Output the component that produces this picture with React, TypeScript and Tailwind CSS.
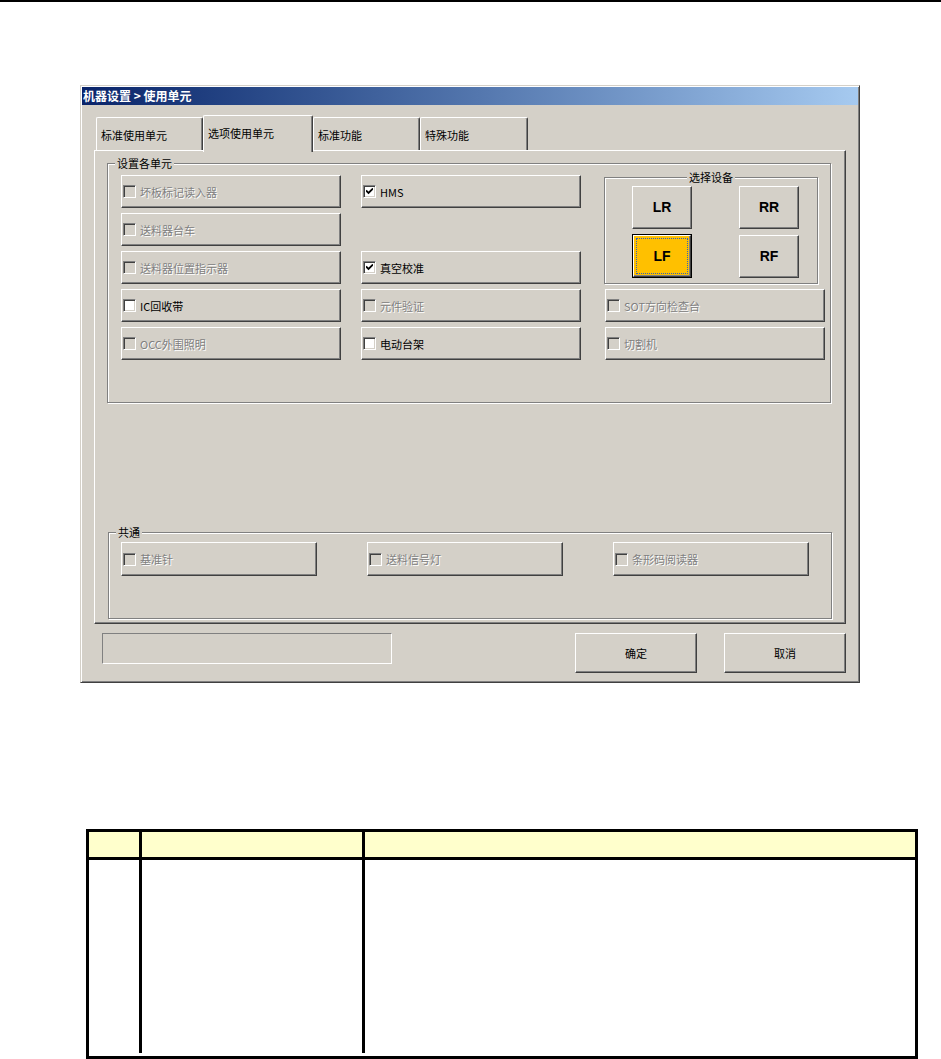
import React from 'react';

const raised =
  'border border-t-white border-l-white border-r-[#404040] border-b-[#404040] shadow-[inset_-1px_-1px_0_#808080] bg-[#d4d0c8]';
const etched = 'border border-[#808080] shadow-[1px_1px_0_#fff,inset_1px_1px_0_#fff]';
const disabledText = 'text-[#808080] [text-shadow:1px_1px_0_#fff]';

function CheckBox({ checked = false, disabled = false }: { checked?: boolean; disabled?: boolean }) {
  return (
    <span
      className={`flex h-[13px] w-[13px] shrink-0 items-center justify-center border border-t-[#808080] border-l-[#808080] border-r-white border-b-white shadow-[inset_1px_1px_0_#404040,inset_-1px_-1px_0_#d4d0c8] ${
        disabled ? 'bg-[#d4d0c8]' : 'bg-white'
      }`}
    >
      {checked && (
        <svg width="7" height="7" viewBox="0 0 7 7">
          <path d="M0 2.5 L2.5 5 L7 0.5" fill="none" stroke="black" strokeWidth="1.8" />
        </svg>
      )}
    </span>
  );
}

interface CheckButtonProps {
  label: string;
  checked?: boolean;
  disabled?: boolean;
  className?: string;
}

function CheckButton({ label, checked, disabled, className = 'w-[220px] h-[33px]' }: CheckButtonProps) {
  return (
    <div className={`${raised} ${className} flex items-center pl-[1px]`}>
      <CheckBox checked={checked} disabled={disabled} />
      <span className={`ml-[4px] text-[11px] leading-[14px] ${disabled ? disabledText : 'text-black'}`}>{label}</span>
    </div>
  );
}

function DeviceButton({ label, active = false }: { label: string; active?: boolean }) {
  if (active) {
    return (
      <div className="h-[44px] w-[60px] border border-black">
        <div className="flex h-full w-full items-center justify-center border border-t-white border-l-white border-r-[#404040] border-b-[#404040] bg-[#ffc000] p-[2px] shadow-[inset_-1px_-1px_0_#808080]">
          <div className="flex h-full w-full items-center justify-center border border-dotted border-[#3060c0] font-['Liberation_Sans',sans-serif] text-[14px] font-bold text-black">
            {label}
          </div>
        </div>
      </div>
    );
  }
  return (
    <div
      className={`${raised} flex h-[43px] w-[60px] items-center justify-center shadow-[inset_-1px_-1px_0_#808080,inset_1px_1px_0_#e8e6e0] font-['Liberation_Sans',sans-serif] text-[14px] font-bold text-black`}
    >
      {label}
    </div>
  );
}

const tabs = [
  { label: '标准使用单元', w: 'w-[107px]' },
  { label: '选项使用单元', w: 'w-[110px]' },
  { label: '标准功能', w: 'w-[107px]' },
  { label: '特殊功能', w: 'w-[108px]' },
];

function Dialog() {
  return (
    <div className="ml-[80px] mt-[83px] h-[598px] w-[780px] border border-t-[#d4d0c8] border-l-[#d4d0c8] border-r-[#404040] border-b-[#404040] bg-[#d4d0c8] p-[1px] shadow-[inset_1px_1px_0_#fff,inset_-1px_-1px_0_#808080]">
      <div className="flex h-[18px] items-center bg-linear-to-r from-[#0a246a] to-[#a6caf0] pl-[1px] text-[12px] font-bold leading-none text-white">
        机器设置 &gt; 使用单元
      </div>

      <div className="pl-[12px]">
        {/* Tabs */}
        <div className="mt-[10px] flex h-[35px] items-end pl-[2px]">
          {tabs.map((t, i) =>
            i === 1 ? (
              <div
                key={t.label}
                className={`${t.w} relative z-10 -mb-[2px] h-[37px] rounded-t-[2px] border-t border-l border-r border-t-white border-l-white border-r-[#404040] bg-[#d4d0c8] pl-[4px] pt-[10px] text-[11px] leading-[14px] text-black shadow-[inset_-1px_0_0_#808080]`}
              >
                {t.label}
              </div>
            ) : (
              <div
                key={t.label}
                className={`${t.w} h-[33px] rounded-t-[2px] border-t border-l border-r border-t-white border-l-white border-r-[#404040] bg-[#d4d0c8] pl-[4px] pt-[10px] text-[11px] leading-[14px] text-black shadow-[inset_-1px_0_0_#808080]`}
              >
                {t.label}
              </div>
            )
          )}
        </div>

        {/* Tab panel */}
        <div className={`${raised} h-[474px] w-[752px] pl-[12px] pt-[12px]`}>
          <div className={`${etched} relative h-[240px] w-[724px]`}>
            <span className="absolute -top-[8px] left-[7px] bg-[#d4d0c8] px-[2px] text-[11px] leading-[14px] text-black">
              设置各单元
            </span>
            <div className="flex pl-[13px] pt-[11px]">
              <div className="flex w-[220px] flex-col gap-[5px]">
                <CheckButton label="坏板标记读入器" disabled />
                <CheckButton label="送料器台车" disabled />
                <CheckButton label="送料器位置指示器" disabled />
                <CheckButton label="IC回收带" />
                <CheckButton label="OCC外围照明" disabled />
              </div>
              <div className="ml-[20px] flex w-[220px] flex-col gap-[5px]">
                <CheckButton label="HMS" checked />
                <div className="h-[33px]" />
                <CheckButton label="真空校准" checked />
                <CheckButton label="元件验证" disabled />
                <CheckButton label="电动台架" />
              </div>
              <div className="ml-[23px] flex w-[221px] flex-col gap-[5px]">
                <div className="h-[109px] pt-[2px]">
                  <div className={`${etched} relative h-[107px] w-[214px]`}>
                    <span className="absolute -top-[8px] left-1/2 -translate-x-1/2 bg-[#d4d0c8] px-[2px] text-[11px] leading-[14px] text-black">
                      选择设备
                    </span>
                    <div className="grid grid-cols-[60px_60px] gap-x-[47px] gap-y-[5px] pl-[27px] pt-[8px]">
                      <DeviceButton label="LR" />
                      <DeviceButton label="RR" />
                      <DeviceButton label="LF" active />
                      <div className="pt-[1px]">
                        <DeviceButton label="RF" />
                      </div>
                    </div>
                  </div>
                </div>
                <div className="ml-[1px]">
                  <CheckButton label="SOT方向检查台" disabled />
                </div>
                <div className="ml-[1px]">
                  <CheckButton label="切割机" disabled />
                </div>
              </div>
            </div>
          </div>

          <div className={`${etched} relative ml-[1px] mt-[129px] h-[87px] w-[724px]`}>
            <span className="absolute -top-[8px] left-[7px] bg-[#d4d0c8] px-[2px] text-[11px] leading-[14px] text-black">
              共通
            </span>
            <div className="flex gap-[50px] pl-[12px] pt-[9px]">
              <CheckButton label="基准针" disabled className="w-[196px] h-[34px]" />
              <CheckButton label="送料信号灯" disabled className="w-[196px] h-[34px]" />
              <CheckButton label="条形码阅读器" disabled className="w-[196px] h-[34px]" />
            </div>
          </div>
        </div>

        {/* Bottom row */}
        <div className="mt-[9px] flex items-start">
          <div className="ml-[8px] h-[31px] w-[290px] border border-t-[#808080] border-l-[#808080] border-r-white border-b-white" />
          <div className={`${raised} ml-[183px] flex h-[40px] w-[122px] items-center justify-center text-[11px] text-black`}>
            确定
          </div>
          <div className={`${raised} ml-[27px] flex h-[40px] w-[122px] items-center justify-center text-[11px] text-black`}>
            取消
          </div>
        </div>
      </div>
    </div>
  );
}

function Table() {
  return (
    <div className="ml-[86px] mt-[146px] h-[230px] w-[832px] border-[3px] border-black">
      <div className="flex h-[28px] border-b-[3px] border-black bg-[#ffffcc]">
        <div className="w-[53px] border-r-[3px] border-black" />
        <div className="w-[223px] border-r-[3px] border-black" />
        <div className="flex-1" />
      </div>
      <div className="flex h-[193px]">
        <div className="w-[53px] border-r-[3px] border-black" />
        <div className="w-[223px] border-r-[3px] border-black" />
        <div className="flex-1" />
      </div>
    </div>
  );
}

export default function App() {
  return (
    <div className="min-h-[1059px] bg-white font-['Noto_Sans_CJK_SC','Liberation_Sans',sans-serif]">
      <div className="h-[2px] bg-black" />
      <Dialog />
      <Table />
    </div>
  );
}
